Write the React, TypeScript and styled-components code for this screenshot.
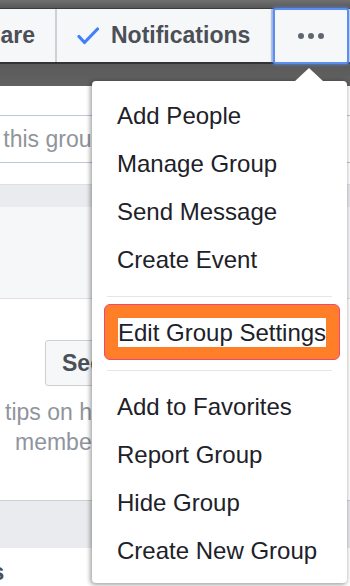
import React from "react";
import styled, { createGlobalStyle } from "styled-components";

const GlobalStyle = createGlobalStyle`
  html, body {
    margin: 0;
    padding: 0;
    background: #ffffff;
  }
  body {
    font-family: "Liberation Sans", Arial, Helvetica, sans-serif;
  }
  * {
    box-sizing: border-box;
  }
`;

const Page = styled.div`
  position: relative;
  width: 350px;
  height: 586px;
  overflow: hidden;
  background: #ffffff;
`;

const CoverBand = styled.div`
  padding: 8px 0 22px;
  background: linear-gradient(#707070, #585858 8px, #5a5a5a 64px, #626262);
`;

const ActionBar = styled.div`
  display: flex;
  height: 56px;
  margin-left: -49px;
  background: #f6f7f9;
  border-top: 1px solid #3c3c3c;
  border-bottom: 2px solid #333333;
`;

const BarButton = styled.div<{ $width: number }>`
  display: flex;
  align-items: center;
  gap: 12px;
  width: ${(p) => p.$width}px;
  padding-left: 20px;
  border-right: 2px solid #cdd0d4;
  color: #4b4f56;
  font-size: 23px;
  font-weight: bold;
  white-space: nowrap;
`;

const MoreButton = styled.div`
  display: flex;
  align-items: center;
  justify-content: center;
  gap: 4px;
  width: 76px;
  margin: -1px 0 -2px;
  background: #f6f7f9;
  border: 2px solid #5b8ef2;
  border-radius: 3px;
  box-shadow: 0 0 3px 1px rgba(91, 142, 242, 0.6);
`;

const Dot = styled.span`
  width: 6px;
  height: 6px;
  border-radius: 50%;
  background: #606770;
`;

const SearchBox = styled.div`
  display: flex;
  align-items: center;
  height: 48px;
  margin: 29px 0 21px;
  border-top: 1px solid #bdc7d8;
  border-bottom: 1px solid #bdc7d8;
  overflow: hidden;
`;

const Placeholder = styled.span`
  margin-left: -76px;
  color: #90949c;
  font-size: 23px;
  white-space: nowrap;
`;

const GrayBand = styled.div<{ $height: number; $line: string }>`
  height: ${(p) => p.$height}px;
  background: #e9ebee;
  border-top: 1px solid ${(p) => p.$line};
`;

const Panel = styled.div`
  height: 92px;
  background: #f6f7f9;
  border-bottom: 1px solid #dddfe2;
`;

const InviteSection = styled.div`
  padding: 41px 0 0 45px;
  height: 201px;
`;

const SuggestButton = styled.div`
  display: flex;
  align-items: center;
  height: 46px;
  width: 200px;
  padding-left: 16px;
  background: #f6f7f9;
  border: 1px solid #ccd0d5;
  border-radius: 3px;
  color: #4b4f56;
  font-size: 23px;
  font-weight: bold;
  white-space: nowrap;
`;

const Tips = styled.div`
  margin: 11px 0 0 -45px;
  color: #90949c;
  font-size: 23px;
  line-height: 30px;
  white-space: nowrap;
`;

const TipLine = styled.div<{ $indent: number }>`
  padding-left: ${(p) => p.$indent}px;
`;

const SectionTitle = styled.div`
  margin: 10px 0 0 -81px;
  color: #4b4f56;
  font-size: 24px;
  font-weight: bold;
  white-space: nowrap;
`;

const Menu = styled.div`
  position: absolute;
  left: 92px;
  top: 81px;
  width: 255px;
  padding: 11px 0 8px;
  background: #ffffff;
  border-radius: 4px;
  box-shadow: -1px 1px 4px 1px rgba(0, 0, 0, 0.35);

  &::before {
    content: "";
    position: absolute;
    left: 202px;
    top: -13px;
    border-left: 15px solid transparent;
    border-right: 15px solid transparent;
    border-bottom: 14px solid #ffffff;
  }
`;

const MenuItem = styled.div`
  display: flex;
  align-items: center;
  height: 48px;
  padding-left: 25px;
  color: #1d2129;
  font-size: 24px;
  white-space: nowrap;
`;

const Separator = styled.div<{ $top: number; $bottom: number }>`
  height: 1px;
  margin: ${(p) => p.$top}px 15px ${(p) => p.$bottom}px;
  background: #e5e6e9;
`;

const Highlight = styled.div`
  display: flex;
  align-items: center;
  height: 56px;
  margin: 0 7px 0 12px;
  padding-left: 13px;
  background: #fe7f27;
  border: 1px solid #f2457a;
  border-radius: 6px;
`;

const HighlightLabel = styled.span`
  background: #ffffff;
  color: #1d2129;
  font-size: 24px;
  line-height: 29px;
  white-space: nowrap;
`;

const CheckIcon = () => (
  <svg width="22" height="18" viewBox="0 0 22 18">
    <path
      d="M2 9.5 L7.5 15.5 L20.5 2"
      fill="none"
      stroke="#4080ff"
      strokeWidth="3.2"
      strokeLinecap="round"
      strokeLinejoin="round"
    />
  </svg>
);

const topItems = ["Add People", "Manage Group", "Send Message", "Create Event"];
const bottomItems = ["Add to Favorites", "Report Group", "Hide Group", "Create New Group"];

export default function App() {
  return (
    <Page>
      <GlobalStyle />
      <CoverBand>
        <ActionBar>
          <BarButton $width={106}>Share</BarButton>
          <BarButton $width={216}>
            <CheckIcon />
            Notifications
          </BarButton>
          <MoreButton>
            <Dot />
            <Dot />
            <Dot />
          </MoreButton>
        </ActionBar>
      </CoverBand>

      <SearchBox>
        <Placeholder>Search this group</Placeholder>
      </SearchBox>
      <GrayBand $height={23} $line="#dddfe2" />
      <Panel />
      <InviteSection>
        <SuggestButton>See Suggested Members</SuggestButton>
        <Tips>
          <TipLine $indent={5}>tips on how to add new</TipLine>
          <TipLine $indent={15}>members to the group.</TipLine>
        </Tips>
      </InviteSection>
      <GrayBand $height={48} $line="#ccd0d5" />
      <SectionTitle>Groups</SectionTitle>

      <Menu>
        {topItems.map((item) => (
          <MenuItem key={item}>{item}</MenuItem>
        ))}
        <Separator $top={12} $bottom={7} />
        <Highlight>
          <HighlightLabel>Edit Group Settings</HighlightLabel>
        </Highlight>
        <Separator $top={10} $bottom={12} />
        {bottomItems.map((item) => (
          <MenuItem key={item}>{item}</MenuItem>
        ))}
      </Menu>
    </Page>
  );
}
